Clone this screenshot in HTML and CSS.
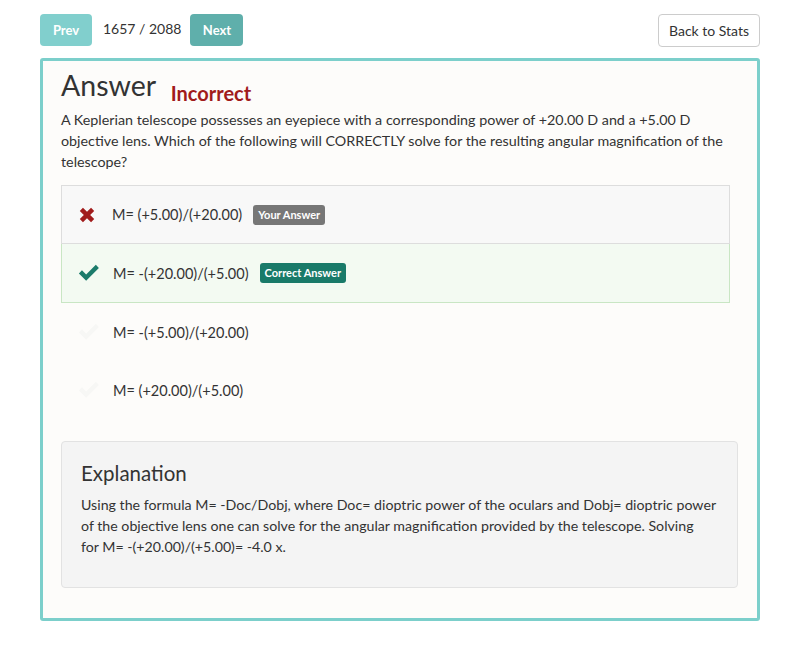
FILE: index.html
```html
<!DOCTYPE html>
<html>
<head>
<meta charset="utf-8">
<link rel="stylesheet" href="styles.css">
</head>
<body>
<div class="page">
  <div class="toolbar">
    <div class="nav">
      <button class="btn btn-prev">Prev</button>
      <span class="counter">1657 / 2088</span>
      <button class="btn btn-next">Next</button>
    </div>
    <button class="btn-back">Back to Stats</button>
  </div>
  <div class="panel">
    <h1 class="title">Answer <span class="status">Incorrect</span></h1>
    <p class="question">A Keplerian telescope possesses an eyepiece with a corresponding power of +20.00 D and a +5.00 D objective lens. Which of the following will CORRECTLY solve for the resulting angular magnification of the telescope?</p>
    <ul class="choices">
      <li class="choice wrong">
        <svg class="icon icon-x" viewBox="0 0 16 16" width="18" height="18"><path d="M1.6 4.4 L4.4 1.6 L8 5.2 L11.6 1.6 L14.4 4.4 L10.8 8 L14.4 11.6 L11.6 14.4 L8 10.8 L4.4 14.4 L1.6 11.6 L5.2 8 Z" fill="#a11b1b"/></svg>
        <span class="text">M= (+5.00)/(+20.00)</span>
        <span class="badge badge-grey">Your Answer</span>
      </li>
      <li class="choice right">
        <svg class="icon" viewBox="0 0 20 16" width="22" height="18"><path d="M0.8 8.4 L3.6 5.6 L7.4 9.4 L16.2 0.6 L19 3.4 L7.4 15 Z" fill="#1b7b6b"/></svg>
        <span class="text">M= -(+20.00)/(+5.00)</span>
        <span class="badge badge-green">Correct Answer</span>
      </li>
      <li class="choice">
        <svg class="icon" viewBox="0 0 20 16" width="22" height="18"><path d="M0.8 8.4 L3.6 5.6 L7.4 9.4 L16.2 0.6 L19 3.4 L7.4 15 Z" fill="#f7f7f5"/></svg>
        <span class="text">M= -(+5.00)/(+20.00)</span>
      </li>
      <li class="choice">
        <svg class="icon" viewBox="0 0 20 16" width="22" height="18"><path d="M0.8 8.4 L3.6 5.6 L7.4 9.4 L16.2 0.6 L19 3.4 L7.4 15 Z" fill="#f7f7f5"/></svg>
        <span class="text">M= (+20.00)/(+5.00)</span>
      </li>
    </ul>
    <div class="explanation">
      <h2 class="exp-title">Explanation</h2>
      <p class="exp-text">Using the formula M= -Doc/Dobj, where Doc= dioptric power of the oculars and Dobj= dioptric power of the objective lens one can solve for the angular magnification provided by the telescope. Solving<br>for M= -(+20.00)/(+5.00)= -4.0 x.</p>
    </div>
  </div>
</div>
</body>
</html>
```

FILE: styles.css
```css
* { box-sizing: border-box; }
html, body { margin: 0; padding: 0; background: #ffffff; }
body {
  font-family: Lato, "Open Sans", sans-serif;
  color: #333333;
  font-size: 14px;
}
.page {
  padding: 14px 40px 0 40px;
  width: 800px;
}
.toolbar {
  display: flex;
  justify-content: space-between;
  align-items: flex-start;
  height: 44px;
}
.nav {
  display: flex;
  align-items: center;
}
.btn {
  height: 32px;
  border: none;
  border-radius: 4px;
  color: #ffffff;
  font-family: Lato, sans-serif;
  font-weight: bold;
  font-size: 13px;
  padding: 0 12px;
}
.btn-prev { background: #81cfcd; width: 52px; }
.btn-next { background: #5fafab; width: 53px; }
.counter {
  font-size: 14px;
  color: #333;
  margin: 0 9px 0 11px;
  padding-bottom: 4px;
}
.btn-back {
  height: 33px;
  width: 102px;
  background: #ffffff;
  border: 1px solid #cccccc;
  border-radius: 4px;
  font-family: Lato, sans-serif;
  font-size: 14px;
  color: #333;
}
.panel {
  border: 3px solid #7ccfcb;
  border-radius: 3px;
  background: #fdfcfa;
  padding: 8px 19px 30px 18px;
  height: 563px;
}
.title {
  margin: 0;
  font-size: 28.5px;
  font-weight: normal;
  line-height: 33px;
  color: #333;
}
.status {
  font-size: 20px;
  font-weight: bold;
  color: #a11b1b;
  margin-left: 8px;
  vertical-align: -5px;
}
.question {
  margin: -1px 0 13px 0;
  line-height: 21px;
  font-size: 14.3px;
}
.choices {
  list-style: none;
  margin: 0 8px 0 0;
  padding: 0;
}
.choice {
  display: flex;
  align-items: center;
  height: 58px;
  padding-left: 16px;
  border: 1px solid transparent;
}
.choice.wrong {
  background: #f8f8f8;
  border-color: #dddddd;
  height: 59px;
}
.choice.right {
  background: #f3faf2;
  border-color: #c9e6c4;
  border-top: none;
  height: 59px;
}
.icon { display: block; margin-right: 13px; }
.choice.wrong .icon { margin-right: 16px; }
.text { font-size: 14.5px; color: #333; }
.badge {
  display: inline-block;
  margin-left: 11px;
  padding: 3px 5px;
  border-radius: 3px;
  font-size: 11px;
  font-weight: bold;
  color: #ffffff;
  line-height: 14px;
}
.badge-grey { background: #777777; }
.badge-green { background: #197a69; }
.explanation {
  margin-top: 22px;
  background: #f4f4f4;
  border: 1px solid #e2e2e2;
  border-radius: 4px;
  padding: 17px 19px 20px 19px;
  height: 147px;
}
.exp-title {
  margin: 0 0 7px 0;
  font-size: 20.5px;
  font-weight: normal;
  line-height: 28px;
  color: #333;
}
.exp-text {
  margin: 0;
  line-height: 21px;
  font-size: 14.2px;
}
```
